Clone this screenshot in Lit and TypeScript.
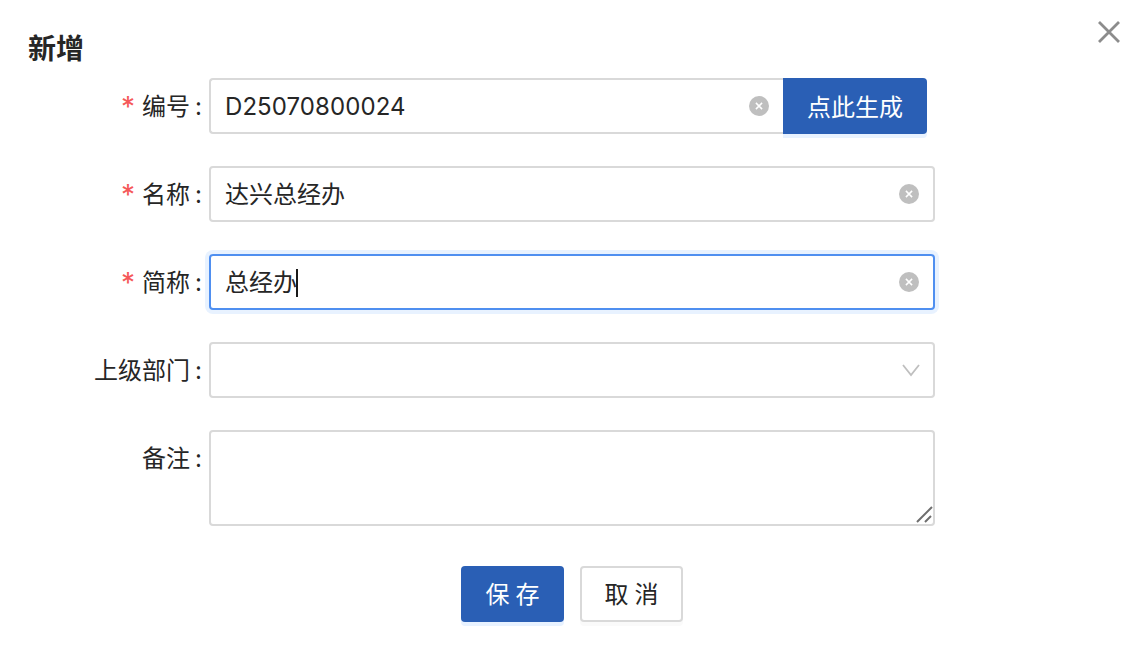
import { LitElement, html, css, svg } from "lit";
import { customElement } from "lit/decorators.js";

const clearIcon = html`<svg class="clear" width="20" height="20" viewBox="0 0 20 20"><circle cx="10" cy="10" r="10" fill="#bfbfbf"/><path d="M6.9 6.9l6.2 6.2M13.1 6.9l-6.2 6.2" stroke="#fff" stroke-width="1.5" fill="none"/></svg>`;

@customElement("app-root")
export class AppRoot extends LitElement {
  static styles = css`
    :host {
      display: block;
      width: 1140px;
      height: 646px;
      overflow: hidden;
      position: relative;
      background: #fff;
      color: #262626;
      font-family: Inter, "Noto Sans CJK SC", sans-serif;
      font-size: 24px;
      box-sizing: border-box;
    }
    .close { position: absolute; left: 1098px; top: 21px; }
    .title {
      height: 78px;
      box-sizing: border-box;
      padding: 31px 0 0 28px;
      font-size: 28px;
      line-height: 36px;
      font-weight: 700;
      color: #262626;
    }
    .form { display: flex; flex-direction: column; gap: 32px; }
    .row { display: flex; align-items: flex-start; }
    .label {
      width: 209px;
      height: 56px;
      box-sizing: border-box;
      padding: 2px 7px 0 0;
      display: flex;
      align-items: center;
      justify-content: flex-end;
      white-space: nowrap;
      line-height: 32px;
    }
    .star { color: #f5585a; margin-right: 7px; font-size: 28px; line-height: 32px; position: relative; top: 0; }
    .colon { margin-left: 5px; width: 7px; }
    .field {
      width: 726px;
      height: 56px;
      box-sizing: border-box;
      border: 2px solid #d9d9d9;
      border-radius: 4px;
      background: #fff;
      display: flex;
      align-items: center;
      padding: 0 14px;
      line-height: 32px;
    }
    .field.focus {
      border-color: #4f8ff0;
      box-shadow: 0 0 0 4px #e8f2ff;
    }
    .value { flex: 1; white-space: nowrap; display: flex; align-items: center; padding-top: 2px; }
    .code { letter-spacing: 0.08px; }
    .caret { display: inline-block; width: 2px; height: 28px; background: #1a1a1a; margin-left: -1px; }
    .group { display: flex; width: 726px; }
    .group .field {
      width: 574px;
      border-right: none;
      border-radius: 4px 0 0 4px;
    }
    .clear { flex: none; }
    .chev { flex: none; margin-right: -2px; }
    .gen {
      width: 144px;
      height: 56px;
      box-sizing: border-box;
      padding-bottom: 2px;
      background: #2a5fb5;
      color: #fff;
      border-radius: 0 4px 4px 0;
      display: flex;
      align-items: center;
      justify-content: center;
      box-shadow: 0 4px 0 #e8f2ff;
    }
    .area { height: 96px; position: relative; }
    .grip { position: absolute; right: 0; bottom: 0; }
    .actions { display: flex; justify-content: center; gap: 16px; margin-top: 40px; padding-left: 4px; }
    .btn {
      width: 103px;
      height: 56px;
      box-sizing: border-box;
      padding-bottom: 3px;
      border-radius: 4px;
      display: flex;
      align-items: center;
      justify-content: center;
      letter-spacing: 6px;
      text-indent: 6px;
    }
    .primary { background: #2a5fb5; color: #fff; box-shadow: 0 4px 0 #e8f2ff; }
    .ghost { background: #fff; border: 2px solid #d9d9d9; box-shadow: 0 4px 0 #fafafa; }
  `;

  private label(text: string, required = false) {
    return html`<div class="label">${required ? html`<span class="star">*</span>` : ""}<span>${text}</span><span class="colon">:</span></div>`;
  }

  render() {
    return html`
      <svg class="close" width="22" height="22" viewBox="0 0 22 22"><path d="M1 1l20 20M21 1L1 21" stroke="#8c8c8c" stroke-width="2.8" fill="none"/></svg>
      <div class="title">新增</div>
      <div class="form">
        <div class="row">
          ${this.label("编号", true)}
          <div class="group">
            <div class="field"><div class="value code">D25070800024</div>${clearIcon}</div>
            <div class="gen">点此生成</div>
          </div>
        </div>
        <div class="row">
          ${this.label("名称", true)}
          <div class="field"><div class="value">达兴总经办</div>${clearIcon}</div>
        </div>
        <div class="row">
          ${this.label("简称", true)}
          <div class="field focus"><div class="value">总经办<span class="caret"></span></div>${clearIcon}</div>
        </div>
        <div class="row">
          ${this.label("上级部门")}
          <div class="field"><div class="value"></div>
            <svg class="chev" width="20" height="20" viewBox="0 0 20 20"><path d="M2 5l8 10 8-10" stroke="#bfbfbf" stroke-width="1.8" fill="none"/></svg>
          </div>
        </div>
        <div class="row">
          ${this.label("备注")}
          <div class="field area">
            <svg class="grip" width="20" height="20" viewBox="0 0 20 20">${svg`<path d="M4 18L19 3M12 18l6-6" stroke="#6e6e6e" stroke-width="2" fill="none"/>`}</svg>
          </div>
        </div>
      </div>
      <div class="actions">
        <div class="btn primary">保存</div>
        <div class="btn ghost">取消</div>
      </div>
    `;
  }
}
